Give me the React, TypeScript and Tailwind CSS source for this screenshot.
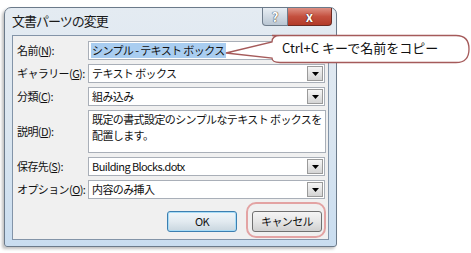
import React from "react";

const jp = { fontFamily: '"Noto Sans CJK JP", "Noto Sans", sans-serif' };

const rows = [
  { label: "名前", key: "N", value: "シンプル - テキスト ボックス", kind: "name" },
  { label: "ギャラリー", key: "G", value: "テキスト ボックス", kind: "select" },
  { label: "分類", key: "C", value: "組み込み", kind: "select" },
  { label: "説明", key: "D", value: "", kind: "area" },
  { label: "保存先", key: "S", value: "Building Blocks.dotx", kind: "select" },
  { label: "オプション", key: "O", value: "内容のみ挿入", kind: "select" },
];

const DropArrow = () => (
  <div className="w-[16px] h-[15px] border border-[#9a9a9a] bg-gradient-to-b from-[#f6f6f6] to-[#d4d4d4] flex items-center justify-center shrink-0">
    <svg width="7" height="4" viewBox="0 0 7 4">
      <path d="M0 0h7L3.5 4z" fill="#000" />
    </svg>
  </div>
);

const Field = ({ row }: { row: (typeof rows)[number] }) => {
  if (row.kind === "area") {
    return (
      <div className="h-[43px] border border-[#a9afb8] bg-white px-[3px] whitespace-nowrap">
        <div className="leading-[16px]">既定の書式設定のシンプルなテキスト ボックスを</div>
        <div className="leading-[16px]">配置します。</div>
      </div>
    );
  }
  return (
    <div className="h-[19px] border border-[#a9afb8] bg-white flex items-center pl-[2px] pr-[1px] whitespace-nowrap">
      {row.kind === "name" ? (
        <span className="bg-[#a9cdf0] px-[1px] leading-[15px]">{row.value}</span>
      ) : (
        <span className="px-[1px] flex-1">{row.value}</span>
      )}
      {row.kind === "select" && <DropArrow />}
    </div>
  );
};

const Callout = () => (
  <div className="absolute left-[224px] top-[31px]">
    <svg width="247" height="36" viewBox="0 0 247 36">
      <path
        d="M48 4.5 H232 Q245 4.5 245 18 Q245 31.5 232 31.5 H56 Q48 31.5 48 27 L2 22 L48 11 Q48 4.5 56 4.5 Z"
        fill="#fff"
        stroke="#a55a5a"
        strokeWidth="1.3"
      />
    </svg>
    <div
      className="absolute left-[58px] top-[8px] text-[13px] leading-[18px] text-[#111] whitespace-nowrap"
      style={jp}
    >
      Ctrl+C キーで名前をコピー
    </div>
  </div>
);

export default function App() {
  return (
    <div className="relative w-[471px] h-[253px] bg-white overflow-hidden" style={jp}>
      <div className="ml-[4px] mt-[7px] w-[333px] h-[240px] rounded-t-[7px] rounded-b-[3px] border border-[#6b7a8a] bg-gradient-to-b from-[#e4ebf2] via-[#dbe6f0] to-[#c9ddf0] shadow-[-2px_2px_3px_rgba(0,0,0,0.25)] flex flex-col">
        {/* title bar */}
        <div className="h-[27px] flex items-start justify-between pl-[7px]">
          <div className="pt-[4px] text-[13px] tracking-[-1px] leading-[18px] text-[#1a1a1a]">文書パーツの変更</div>
          <div className="flex mr-[4px]">
            <div className="w-[26px] h-[18px] rounded-bl-[4px] border border-t-0 border-[#6f7d8c] bg-gradient-to-b from-[#e8eef4] to-[#b9c6d3] flex items-center justify-center text-[13px] font-bold text-white [text-shadow:0_0_1px_#333,0_0_1px_#333]">
              ?
            </div>
            <div className="w-[44px] h-[18px] rounded-br-[4px] border border-l-0 border-t-0 border-[#6b2a22] bg-gradient-to-b from-[#dd8f83] via-[#c4503f] to-[#b23a28] flex items-center justify-center text-[13px] font-bold text-white [text-shadow:0_0_1px_#3a1410,0_0_1px_#3a1410]">
              x
            </div>
          </div>
        </div>
        {/* client area */}
        <div className="mx-[7px] border border-[#8394a8] bg-[#f0f0f0] h-[205px] pl-[4px] pr-[3px] pt-[5px] flex flex-col text-[11px] tracking-[-0.6px] text-[#111]">
          <div className="flex flex-col gap-[4px]">
            {rows.map((row) => (
              <div key={row.key} className="grid grid-cols-[71px_1fr] items-center">
                <div className="whitespace-nowrap">
                  {row.label}(<span className="underline">{row.key}</span>):
                </div>
                <Field row={row} />
              </div>
            ))}
          </div>
          <div className="flex justify-end gap-[15px] mt-[12px] pr-[3px]">
            <div className="w-[70px] h-[21px] rounded-[3px] border border-[#3c7fb1] bg-gradient-to-b from-[#f0f6fa] via-[#e2eaf0] to-[#c9d6df] shadow-[inset_0_0_0_1px_#a8dcf6] flex items-center justify-center">
              OK
            </div>
            <div className="relative">
              <div className="absolute -left-[6px] -top-[9px] w-[80px] h-[36px] rounded-[10px] border-2 border-[#e3a3a3]" />
              <div className="w-[70px] h-[21px] rounded-[3px] border border-[#707070] bg-gradient-to-b from-[#f4f4f4] via-[#e6e6e6] to-[#d0d0d0] flex items-center justify-center">
                キャンセル
              </div>
            </div>
          </div>
        </div>
      </div>
      <Callout />
    </div>
  );
}
